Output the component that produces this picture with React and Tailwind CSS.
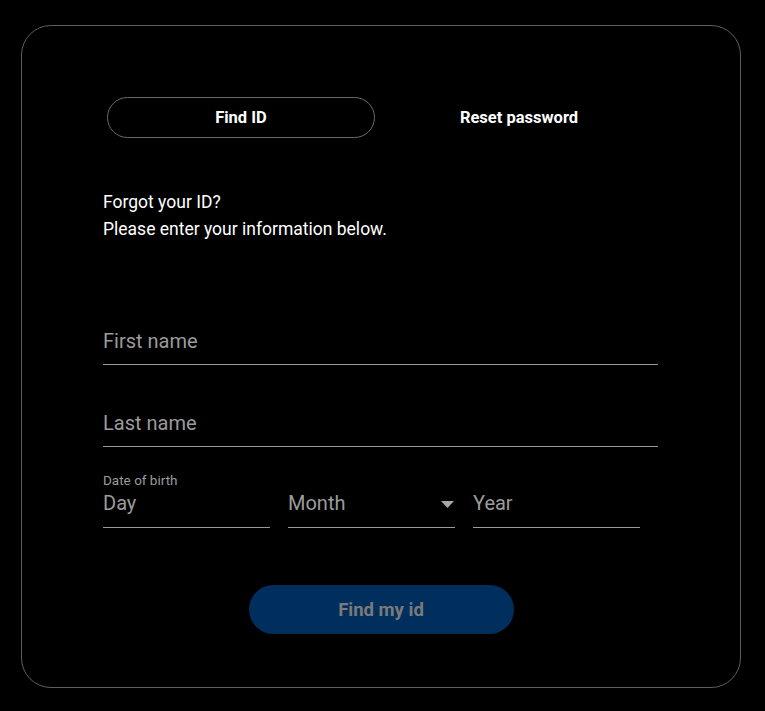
import React from 'react';

const font = { fontFamily: 'Roboto, "Noto Sans", sans-serif' };

const App = () => {
    return (
        <div className="min-h-[711px] w-full bg-black pt-[25px] pl-[21px]" style={font}>
            <div className="w-[720px] h-[663px] rounded-[30px] border border-[#5e5e5e] px-[81px] pt-[71px]">
                <div className="ml-[4px] flex gap-[10px]">
                    <button className="w-[268px] h-[41px] pt-[2px] rounded-full border border-[#6b6b6b] text-white text-[16.5px] font-bold">
                        Find ID
                    </button>
                    <button className="w-[268px] h-[41px] pt-[2px] rounded-full text-white text-[16.5px] font-bold">
                        Reset password
                    </button>
                </div>

                <div className="mt-[51px] text-white text-[17.5px] leading-[27px]">
                    <p>Forgot your ID?</p>
                    <p>Please enter your information below.</p>
                </div>

                <div className="mt-[81px] w-[555px]">
                    <input
                        placeholder="First name"
                        className="w-full h-[41px] pb-[7px] bg-transparent border-b border-[#9a9a9a] text-[20px] text-white placeholder:text-[#9b9b9b] outline-none"
                    />
                    <input
                        placeholder="Last name"
                        className="mt-[41px] w-full h-[41px] pb-[7px] bg-transparent border-b border-[#9a9a9a] text-[20px] text-white placeholder:text-[#9b9b9b] outline-none"
                    />

                    <div className="mt-[27px]">
                        <p className="text-[13.5px] leading-[13px] text-[#9b9b9b]">Date of birth</p>
                        <div className="flex gap-[18px]">
                            <input
                                placeholder="Day"
                                className="w-[167px] h-[41px] pb-[9px] bg-transparent border-b border-[#9a9a9a] text-[20px] text-white placeholder:text-[#9b9b9b] outline-none"
                            />
                            <div className="w-[167px] h-[41px] pb-[9px] border-b border-[#9a9a9a] flex items-center justify-between">
                                <span className="text-[20px] text-[#9b9b9b]">Month</span>
                                <svg width="13" height="7" viewBox="0 0 13 7" className="mr-[1px] mt-[4px]">
                                    <path d="M0 0 L13 0 L6.5 7 Z" fill="#a8a8a8" />
                                </svg>
                            </div>
                            <input
                                placeholder="Year"
                                className="w-[167px] h-[41px] pb-[9px] bg-transparent border-b border-[#9a9a9a] text-[20px] text-white placeholder:text-[#9b9b9b] outline-none"
                            />
                        </div>
                    </div>
                </div>

                <div className="mt-[57px] flex justify-center">
                    <button className="w-[265px] h-[49px] pt-[2px] rounded-full bg-[#002f5e] text-[#7a7a7a] text-[18.5px] font-bold">
                        Find my id
                    </button>
                </div>
            </div>
        </div>
    );
};

export default App;
